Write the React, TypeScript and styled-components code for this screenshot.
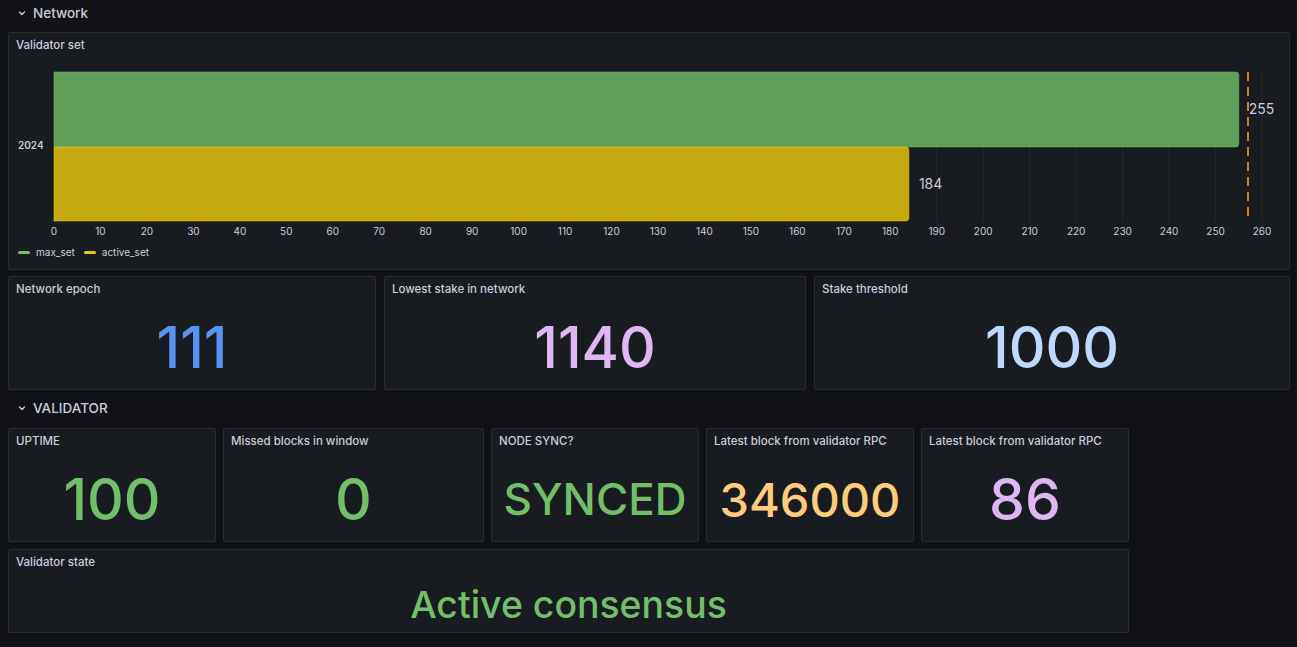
import React from "react";
import styled, { createGlobalStyle } from "styled-components";

const GlobalStyle = createGlobalStyle`
  html, body {
    margin: 0;
    padding: 0;
    background: #111217;
  }
  body {
    font-family: Inter, "Noto Sans", "Liberation Sans", sans-serif;
    color: #ccccdc;
    -webkit-font-smoothing: antialiased;
  }
`;

const colors = {
  green: "#73bf69",
  yellow: "#f2cc0c",
  blue: "#5794f2",
  lightPurple: "#deb6f2",
  superLightBlue: "#c0d8ff",
  lightOrange: "#ffcb7d",
  orange: "#ff9830",
};

const Page = styled.div`
  width: 1297px;
  height: 647px;
  box-sizing: border-box;
  padding: 0 7px 0 8px;
  display: flex;
  flex-direction: column;
  overflow: hidden;
`;

const RowHeader = styled.div<{ $top: number; $bottom: number }>`
  height: 26px;
  margin: ${({ $top, $bottom }) => `${$top}px 0 ${$bottom}px`};
  display: flex;
  align-items: center;
  gap: 7px;
  padding-left: 10px;
`;

const RowTitle = styled.span`
  font-size: 13.5px;
  font-weight: 500;
  color: #ccccdc;
`;

const Grid = styled.div<{ $cols: string; $gap: number; $bottom?: number }>`
  display: grid;
  grid-template-columns: ${({ $cols }) => $cols};
  gap: ${({ $gap }) => $gap}px;
  margin-bottom: ${({ $bottom = 7 }) => $bottom}px;
`;

const Panel = styled.div<{ $h: number }>`
  height: ${({ $h }) => $h}px;
  box-sizing: border-box;
  background: #181b1f;
  border: 1px solid #2a2c32;
  border-radius: 2px;
  display: flex;
  flex-direction: column;
  overflow: hidden;
`;

const PanelTitle = styled.div`
  height: 23px;
  flex: none;
  display: flex;
  align-items: center;
  padding: 0 7px;
  font-size: 11.5px;
  font-weight: 500;
  color: #ccccdc;
  white-space: nowrap;
`;

const StatBody = styled.div`
  flex: 1;
  display: flex;
  align-items: center;
  justify-content: center;
  padding-top: 5px;
`;

const StatValue = styled.div<{ $color: string; $size: number }>`
  color: ${({ $color }) => $color};
  font-size: ${({ $size }) => $size}px;
  font-weight: 500;
  line-height: 1;
  white-space: nowrap;
`;

const ChartSvg = styled.svg`
  display: block;
  margin-left: 7px;
  flex: none;
`;

const Legend = styled.div`
  display: flex;
  align-items: center;
  gap: 9px;
  height: 14px;
  padding-left: 9px;
`;

const LegendItem = styled.div`
  display: flex;
  align-items: center;
  gap: 6px;
  font-size: 10px;
  color: #ccccdc;
`;

const Swatch = styled.span<{ $color: string }>`
  width: 12px;
  height: 3px;
  border-radius: 2px;
  background: ${({ $color }) => $color};
`;

const Chevron = () => (
  <svg width="8" height="8" viewBox="0 0 8 8">
    <path d="M1.5 3 L4 5.5 L6.5 3" fill="none" stroke="#ccccdc" strokeWidth="1.3" strokeLinecap="round" strokeLinejoin="round" />
  </svg>
);

const X0 = 38;
const SCALE = 1208 / 260;
const ticks = Array.from({ length: 27 }, (_, i) => i * 10);
const xOf = (v: number) => X0 + v * SCALE;

const barPath = (x0: number, x1: number, y0: number, y1: number, r: number) =>
  `M${x0} ${y0} H${x1 - r} Q${x1} ${y0} ${x1} ${y0 + r} V${y1 - r} Q${x1} ${y1} ${x1 - r} ${y1} H${x0} Z`;

const ValidatorChart = () => {
  const bars = [
    { value: 255, color: colors.green, y0: 16, y1: 91 },
    { value: 184, color: colors.yellow, y0: 91, y1: 165 },
  ];
  return (
    <ChartSvg width={1266} height={189} viewBox="0 0 1266 189">
      {ticks.map((t) => (
        <line key={t} x1={xOf(t)} x2={xOf(t)} y1={16} y2={165} stroke="rgba(204,204,220,0.08)" strokeWidth={1} />
      ))}
      {bars.map((b) => (
        <g key={b.value}>
          <path
            d={barPath(X0, xOf(b.value), b.y0, b.y1, 3)}
            fill={b.color}
            fillOpacity={0.8}
            stroke={b.color}
            strokeOpacity={0.5}
            strokeWidth={1}
          />
          <text x={xOf(b.value) + 10} y={(b.y0 + b.y1) / 2 + 1} dominantBaseline="middle" fontSize={14} fill="#ccccdc">
            {b.value}
          </text>
        </g>
      ))}
      <line x1={1232} x2={1232} y1={16} y2={165} stroke={colors.orange} strokeOpacity={0.8} strokeWidth={2} strokeDasharray="9 6" />
      <text x={2} y={90} dominantBaseline="middle" fontSize={10} fontWeight={600} fill="#ccccdc">
        2024
      </text>
      {ticks.map((t) => (
        <text key={t} x={xOf(t)} y={176} textAnchor="middle" dominantBaseline="middle" fontSize={10} fill="#ccccdc">
          {t}
        </text>
      ))}
    </ChartSvg>
  );
};

const Stat = ({ title, value, color, size, h }: { title: string; value: string; color: string; size: number; h: number }) => (
  <Panel $h={h}>
    <PanelTitle>{title}</PanelTitle>
    <StatBody>
      <StatValue $color={color} $size={size}>
        {value}
      </StatValue>
    </StatBody>
  </Panel>
);

export default function App() {
  return (
    <Page>
      <GlobalStyle />
      <RowHeader $top={0} $bottom={6}>
        <Chevron />
        <RowTitle>Network</RowTitle>
      </RowHeader>
      <Grid $cols="1fr" $gap={0} $bottom={6}>
        <Panel $h={238}>
          <PanelTitle>Validator set</PanelTitle>
          <ValidatorChart />
          <Legend>
            <LegendItem>
              <Swatch $color={colors.green} />
              max_set
            </LegendItem>
            <LegendItem>
              <Swatch $color={colors.yellow} />
              active_set
            </LegendItem>
          </Legend>
        </Panel>
      </Grid>
      <Grid $cols="368px 422px 476px" $gap={8}>
        <Stat title="Network epoch" value="111" color={colors.blue} size={57} h={114} />
        <Stat title="Lowest stake in network" value="1140" color={colors.lightPurple} size={57} h={114} />
        <Stat title="Stake threshold" value="1000" color={colors.superLightBlue} size={57} h={114} />
      </Grid>
      <RowHeader $top={-2} $bottom={7}>
        <Chevron />
        <RowTitle>VALIDATOR</RowTitle>
      </RowHeader>
      <Grid $cols="208px 261px 208px 208px 208px" $gap={7}>
        <Stat title="UPTIME" value="100" color={colors.green} size={57} h={114} />
        <Stat title="Missed blocks in window" value="0" color={colors.green} size={57} h={114} />
        <Stat title="NODE SYNC?" value="SYNCED" color={colors.green} size={44} h={114} />
        <Stat title="Latest block from validator RPC" value="346000" color={colors.lightOrange} size={47} h={114} />
        <Stat title="Latest block from validator RPC" value="86" color={colors.lightPurple} size={57} h={114} />
      </Grid>
      <Grid $cols="1121px" $gap={0}>
        <Stat title="Validator state" value="Active consensus" color={colors.green} size={37.4} h={84} />
      </Grid>
    </Page>
  );
}
